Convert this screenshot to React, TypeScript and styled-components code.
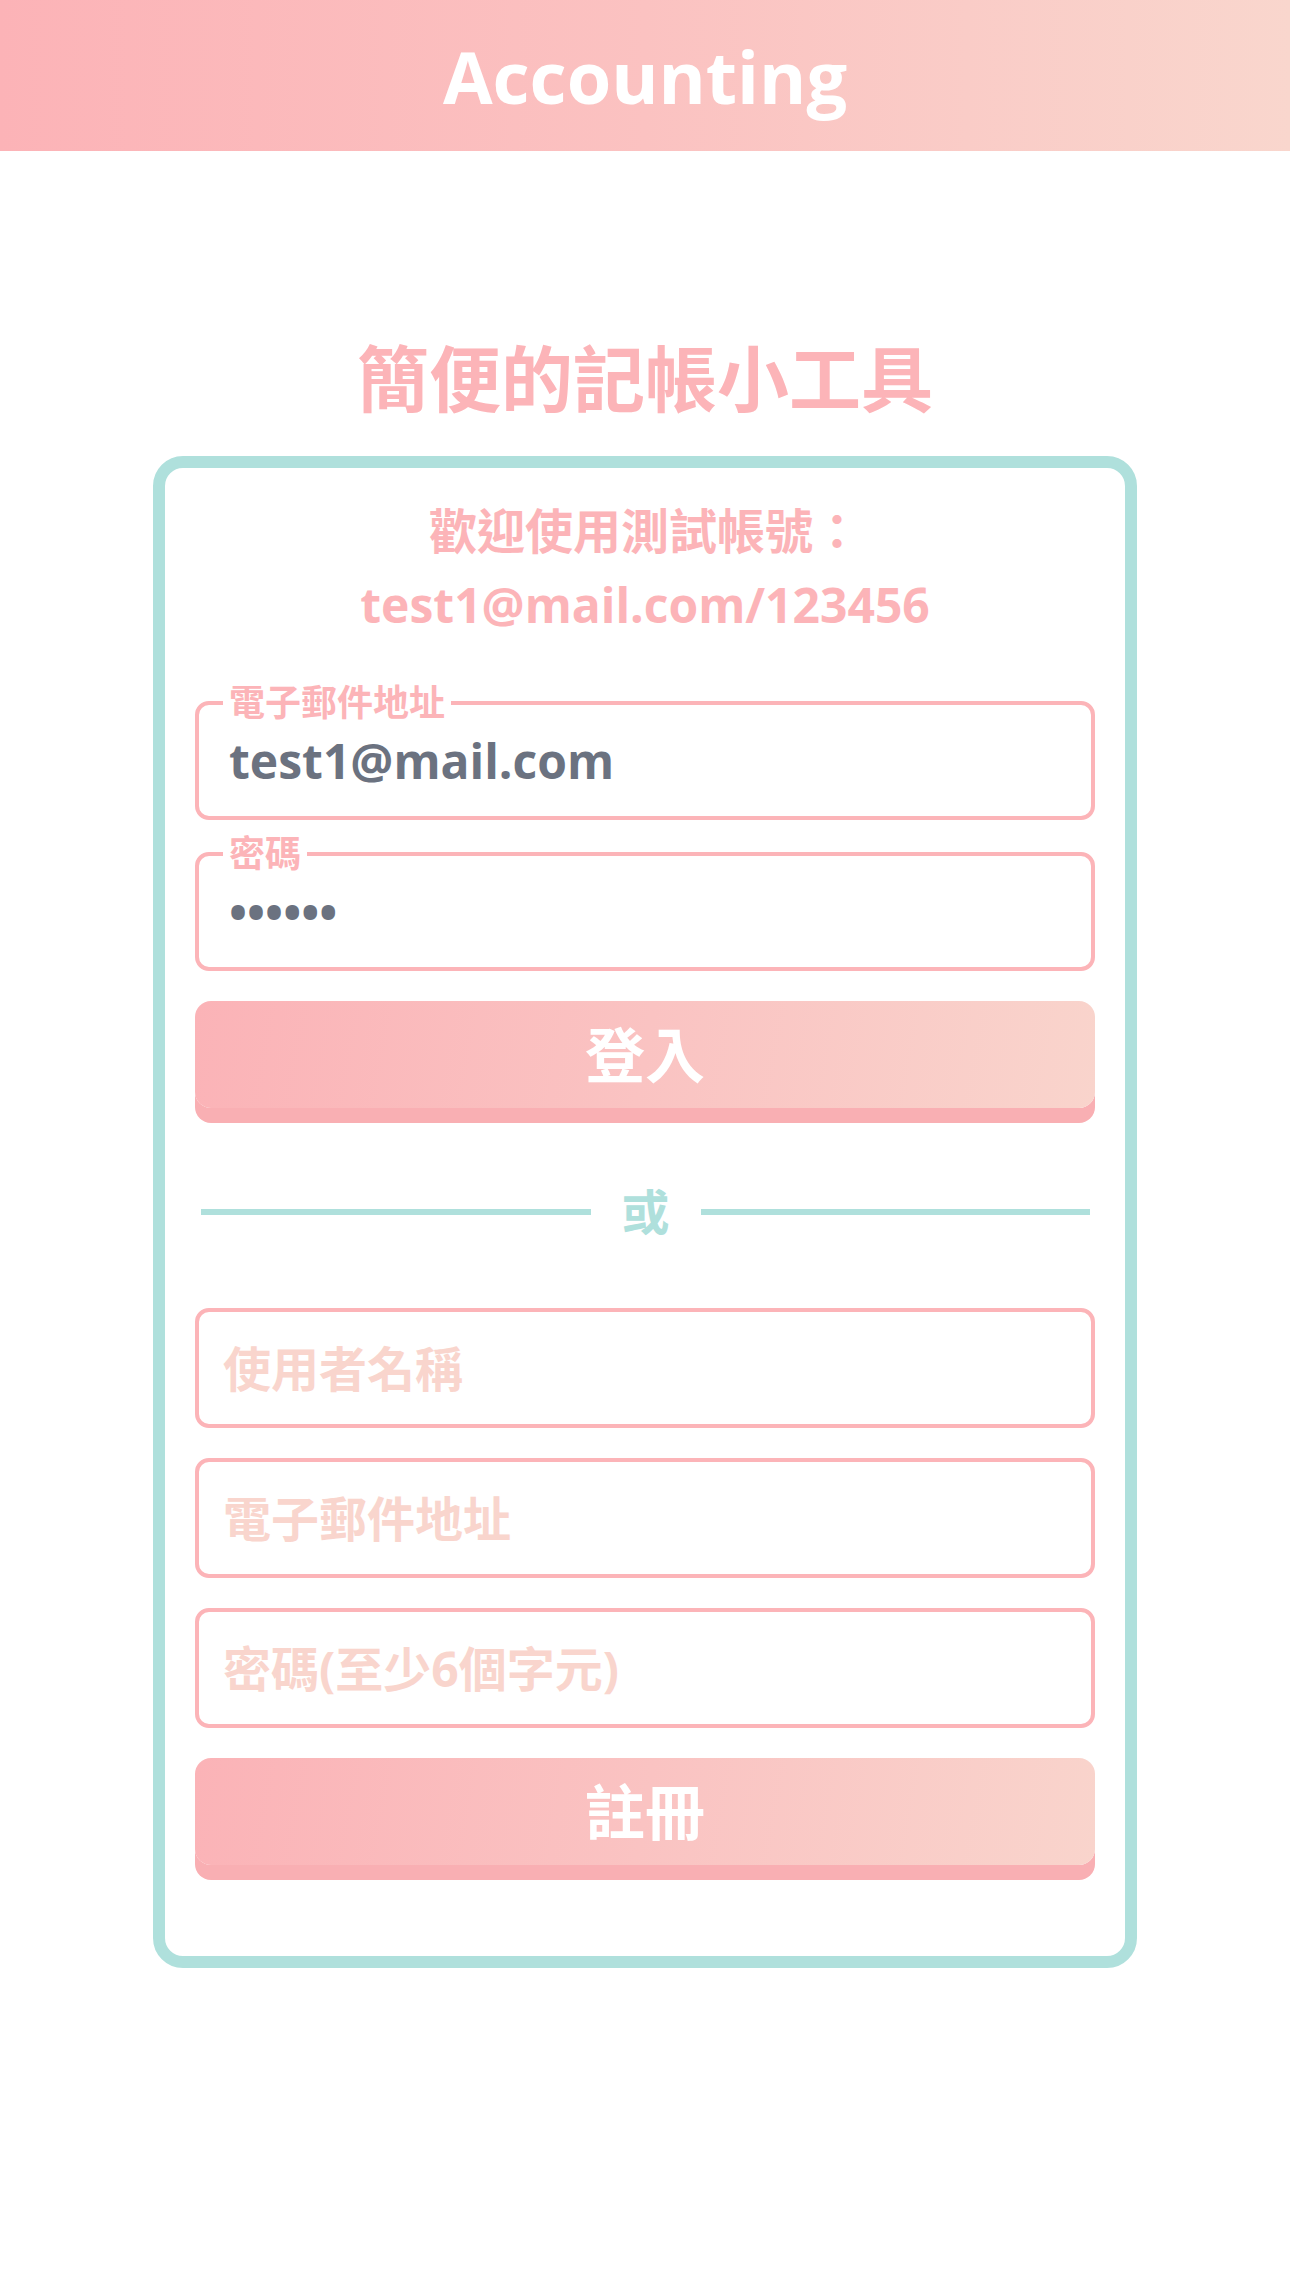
import React from "react";
import styled, { createGlobalStyle } from "styled-components";

const PINK = "#fcb4b8";
const PINK_LIGHT = "#f9d5cd";
const TEAL = "#afe0dc";
const SHADOW = "#f9afb3";

const GlobalStyle = createGlobalStyle`
  html, body {
    margin: 0;
    padding: 0;
    background: #ffffff;
  }
  body {
    font-family: "Open Sans", "Noto Sans CJK TC", "Noto Sans", sans-serif;
    font-weight: 700;
  }
  * { box-sizing: border-box; }
`;

const Page = styled.div`
  min-height: 2274px;
  display: flex;
  flex-direction: column;
  align-items: center;
`;

const Header = styled.header`
  width: 100%;
  height: 151px;
  background: linear-gradient(to right, #fcb3b7 0%, #fbc2c1 50%, #f9d6cd 100%);
  display: flex;
  align-items: center;
  justify-content: center;
`;

const Brand = styled.h1`
  margin: 0;
  font-size: 72px;
  line-height: 1;
  font-weight: 700;
  color: #ffffff;
`;

const Title = styled.h2`
  margin: 177px 0 0;
  font-size: 72px;
  line-height: 100px;
  font-weight: 700;
  color: ${PINK};
  text-align: center;
`;

const Card = styled.section`
  margin-top: 28px;
  width: 984px;
  border: 12px solid ${TEAL};
  border-radius: 30px;
  padding: 26px 30px 76px;
  display: flex;
  flex-direction: column;
`;

const Welcome = styled.p`
  margin: 0 0 43px;
  font-size: 48px;
  line-height: 74px;
  color: ${PINK};
  text-align: center;
`;

const Form = styled.form`
  display: flex;
  flex-direction: column;
`;

const Field = styled.fieldset<{ $gap: number }>`
  margin: 0 0 ${(p) => p.$gap}px;
  padding: 0 20px 0 24px;
  border: 4px solid ${PINK};
  border-radius: 14px;
  min-width: 0;
`;

const Legend = styled.legend`
  padding: 0 6px;
  font-size: 36px;
  line-height: 36px;
  color: ${PINK};
`;

const FieldInput = styled.input`
  display: block;
  width: 100%;
  height: 95px;
  margin: 0;
  padding: 0 6px 16px;
  border: none;
  outline: none;
  background: transparent;
  font-family: inherit;
  font-weight: 700;
  font-size: 48px;
  color: #6b7280;
`;

const BoxInput = styled.input`
  display: block;
  width: 100%;
  height: 120px;
  margin: 0 0 30px;
  padding: 0 24px;
  border: 4px solid ${PINK};
  border-radius: 14px;
  outline: none;
  background: #fff;
  font-family: inherit;
  font-weight: 700;
  font-size: 48px;
  color: #6b7280;
  &::placeholder {
    color: ${PINK_LIGHT};
    opacity: 1;
  }
`;

const Button = styled.button`
  display: block;
  width: 100%;
  height: 107px;
  margin: 0 0 15px;
  padding: 0;
  border: none;
  border-radius: 16px;
  background: linear-gradient(100deg, #fbb3b7 0%, #fac3c2 50%, #f9d4cc 100%);
  box-shadow: 0 15px 0 ${SHADOW};
  font-family: inherit;
  font-weight: 700;
  font-size: 60px;
  line-height: 1;
  color: #ffffff;
  cursor: pointer;
`;

const Divider = styled.div`
  display: flex;
  align-items: center;
  padding: 0 5px 0 6px;
  margin: 39px 0 46px;
  height: 100px;
`;

const Rule = styled.span`
  flex: 1;
  height: 6px;
  background: ${TEAL};
`;

const DividerText = styled.span`
  margin: 0 31px;
  font-size: 48px;
  line-height: 1;
  color: ${TEAL};
`;

export default function App() {
  return (
    <>
      <GlobalStyle />
      <Page>
        <Header>
          <Brand>Accounting</Brand>
        </Header>
        <Title>簡便的記帳小工具</Title>
        <Card>
          <Welcome>
            歡迎使用測試帳號：
            <br />
            test1@mail.com/123456
          </Welcome>
          <Form onSubmit={(e) => e.preventDefault()}>
            <Field $gap={16}>
              <Legend>電子郵件地址</Legend>
              <FieldInput type="email" defaultValue="test1@mail.com" />
            </Field>
            <Field $gap={30}>
              <Legend>密碼</Legend>
              <FieldInput type="password" defaultValue="123456" />
            </Field>
            <Button type="submit">登入</Button>
          </Form>
          <Divider>
            <Rule />
            <DividerText>或</DividerText>
            <Rule />
          </Divider>
          <Form onSubmit={(e) => e.preventDefault()}>
            <BoxInput type="text" placeholder="使用者名稱" />
            <BoxInput type="email" placeholder="電子郵件地址" />
            <BoxInput type="password" placeholder="密碼(至少6個字元)" />
            <Button type="submit">註冊</Button>
          </Form>
        </Card>
      </Page>
    </>
  );
}
